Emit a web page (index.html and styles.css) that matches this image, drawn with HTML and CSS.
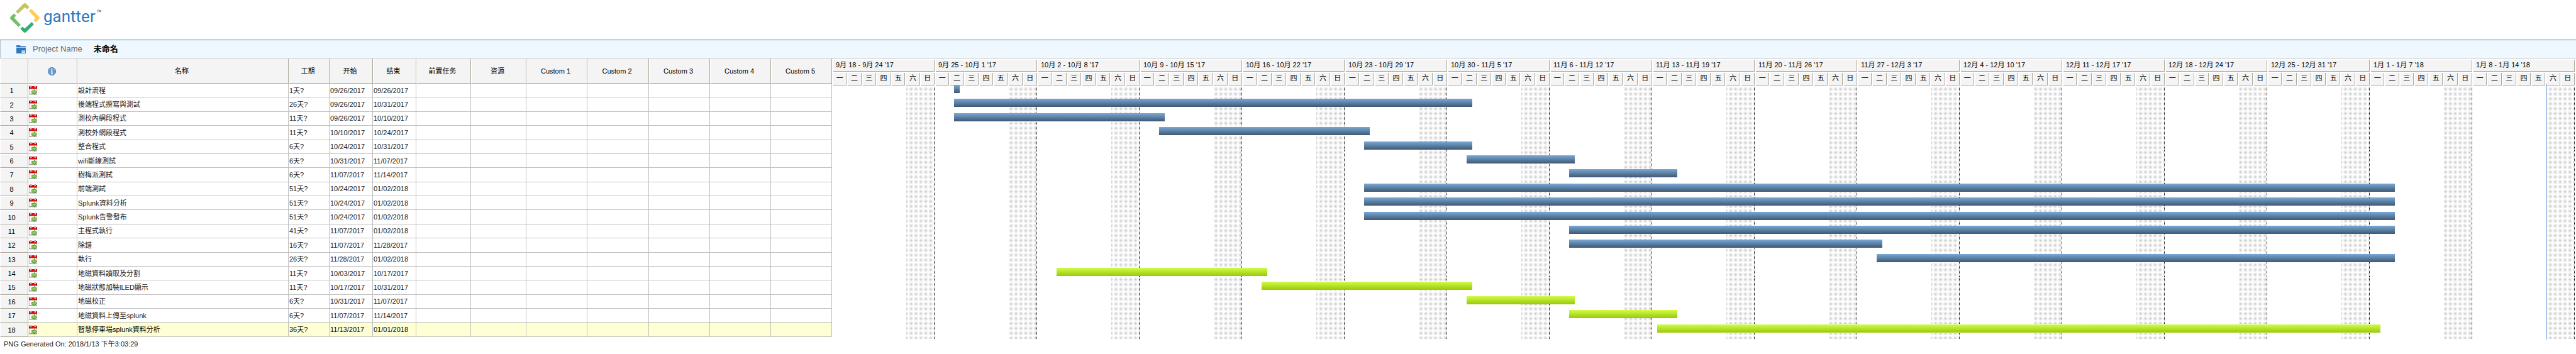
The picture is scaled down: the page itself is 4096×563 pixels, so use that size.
FILE: index.html
```html
<!DOCTYPE html>
<html lang="zh-Hant">
<head>
<meta charset="utf-8">
<title>gantter</title>
<link rel="stylesheet" href="styles.css">
</head>
<body>
<svg class="defs" aria-hidden="true">
  <symbol id="calendar" viewBox="0 0 14 16">
    <path d="M.5 5h13v9.500h-13z" fill="#fff" stroke="#b9b9b9"/>
    <path d="M0 14h14v1.500H0z" fill="#9b9b9b"/>
    <path d="M0 1h14v4.800H0z" fill="#e0060b"/>
    <rect x="2" y="0" width="2.600" height="3.500" rx="1.200" fill="#dcdcdc" stroke="#8d6a6a" stroke-width=".6"/>
    <rect x="9.400" y="0" width="2.600" height="3.500" rx="1.200" fill="#dcdcdc" stroke="#8d6a6a" stroke-width=".6"/>
    <path d="M5 9h4V6.800l4.700 4.400L9 15.500v-2.300H5z" fill="#8ccb55" stroke="#3c8a1c" stroke-width=".9"/>
  </symbol>
</svg>

<header class="brand">
  <svg class="brand-mark" viewBox="-78 -78 156 156" aria-hidden="true">
    <g id="arms" stroke-width="3" stroke-linejoin="round">
      <path fill="#bfc75e" stroke="#bfc75e" d="M-44-33L-6-71Q0-76 6-71L21-55L12-46L0-55L-35-22Z"/>
      <path fill="#fbcd57" stroke="#fbcd57" transform="rotate(90)" d="M-44-33L-6-71Q0-76 6-71L21-55L12-46L0-55L-35-22Z"/>
      <path fill="#2fb073" stroke="#2fb073" transform="rotate(180)" d="M-44-33L-6-71Q0-76 6-71L21-55L12-46L0-55L-35-22Z"/>
      <path fill="#77bd6d" stroke="#77bd6d" transform="rotate(270)" d="M-44-33L-6-71Q0-76 6-71L21-55L12-46L0-55L-35-22Z"/>
    </g>
  </svg>
  <span class="brand-name">gantter</span><span class="brand-tm">™</span>
</header>

<section class="project">
  <svg class="project-icon" viewBox="0 0 16 14" aria-hidden="true">
    <path fill="#2a77bd" d="M0 0h6l1.500 1.500H16V14H0z"/>
    <path fill="#d6e8f8" d="M0 3.300h16v.8H0zM9 9h6v4H9z"/>
    <path fill="#2a77bd" d="M10.500 10.500h3v1h-3z"/>
  </svg>
  <span class="project-label">Project Name</span>
  <strong class="project-name">未命名</strong>
</section>

<main class="chart">
  <table class="tasks">
    <colgroup>
      <col class="c-num"><col class="c-info"><col class="c-name"><col class="c-dur">
      <col class="c-date"><col class="c-date"><col class="c-pred"><col class="c-res">
      <col class="c-custom"><col class="c-custom2"><col class="c-custom"><col class="c-custom"><col class="c-custom">
    </colgroup>
    <thead>
      <tr>
        <th></th>
        <th>
          <svg class="info" viewBox="0 0 14 14" role="img" aria-label="Info">
            <circle cx="7" cy="7" r="6.500" fill="#4f84c4" stroke="#3a669f"/>
            <circle cx="7" cy="7" r="5.400" fill="#5f93d0" stroke="#a9c8ea" stroke-width=".8"/>
            <path fill="#fff" d="M6 2.800h2v1.700H6zM5.300 5.600H8v4.200h.9v1.100H5.200V9.800h.9V6.700h-.8z"/>
          </svg>
        </th>
        <th>名称</th><th>工期</th><th>开始</th><th>结束</th><th>前置任务</th><th>资源</th>
        <th>Custom 1</th><th>Custom 2</th><th>Custom 3</th><th>Custom 4</th><th>Custom 5</th>
      </tr>
    </thead>
    <tbody id="task-rows"></tbody>
  </table>

  <div class="timeline">
    <div class="weeks" id="weeks"></div>
    <div class="bars" id="bars"></div>
    <div class="today" id="today"></div>
  </div>
</main>

<footer class="stamp">PNG Generated On: 2018/1/13 下午3:03:29</footer>
<script src="script.js"></script>
</body>
</html>
```
FILE: styles.css
```css
* { box-sizing: border-box; }

body {
  margin: 0;
  min-height: 100vh;
  display: grid;
  grid-template-rows: 63px 30px 1fr 23px;
  background: #fff;
  color: #222;
  font: 11px/14px "Liberation Sans", "Noto Sans CJK TC", sans-serif;
}

.defs { display: none; }

/* Brand */
.brand {
  display: flex;
  align-items: flex-start;
  padding: 4px 0 0 15px;
}
.brand-mark { width: 49px; height: 49px; }
.brand-name {
  margin-left: 5px;
  color: #2b79c0;
  font: 26px/36px Roboto, sans-serif;
  padding-top: 4px;
}
.brand-tm {
  margin-left: 2px;
  padding-top: 10px;
  color: #444;
  font: 13px/14px Roboto, sans-serif;
}

/* Project bar */
.project {
  display: flex;
  align-items: center;
  padding-left: 25px;
  background: #eff7ff;
  border-top: 1px solid #2a77bd;
  border-bottom: 1px solid #bfbfbf;
  border-left: 1px solid #bfbfbf;
  font-size: 13px;
  line-height: 18px;
}
.project-icon { width: 15px; height: 13px; }
.project-label { margin-left: 11px; color: #6b6b6b; }
.project-name { margin-left: 18px; color: #000; }

/* Task table */
.chart {
  display: grid;
  grid-template-columns: 1323px 1fr;
}
.tasks {
  table-layout: fixed;
  width: 100%;
  margin-bottom: 4px;
  border-collapse: separate;
  border-spacing: 0;
}
.c-num { width: 45px; }
.c-info { width: 78px; }
.c-name { width: 336px; }
.c-dur { width: 65px; }
.c-date { width: 69px; }
.c-pred { width: 87px; }
.c-res { width: 88px; }
.c-custom { width: 97px; }
.c-custom2 { width: 98px; }

.tasks th {
  padding: 0 4px 0 0;
  background: #f4f4f4;
  border: 1px solid #fff;
  border-right-color: #aca899;
  border-bottom-color: #aca899;
  color: #000;
  font-weight: normal;
  text-align: center;
  vertical-align: middle;
}
.tasks thead tr { height: 40px; }
.tasks tbody th { padding: 0 8px 0 0; }
.tasks td {
  padding: 0 0 0 1px;
  border-right: 1px solid #bfbfbf;
  border-bottom: 1px solid #bfbfbf;
  white-space: nowrap;
  vertical-align: middle;
}
.tasks .selected td { background: #ffffd5; color: #000; }
.info { display: block; width: 13px; height: 13px; margin: 0 auto; }
.calendar { display: block; width: 13px; height: 15px; }

/* Timeline */
.timeline {
  position: relative;
  margin-left: 2px;
}
.weeks {
  display: grid;
  grid-template-columns: repeat(17, 1fr);
  height: 100%;
}
.week {
  display: grid;
  grid-template-rows: 19px 20px 1fr;
  row-gap: 2px;
  padding-top: 2px;
}
.week-label,
.day {
  background: #f4f4f4;
  border-right: 1px solid #aca899;
  border-bottom: 1px solid #aca899;
  color: #000;
  white-space: nowrap;
}
.week-label { margin-right: 2px; padding: 1px 0 0 4px; }
.days,
.plot {
  display: grid;
  grid-template-columns: repeat(7, 1fr);
}
.day { margin-right: 2px; text-align: center; line-height: 17px; }
.weekend {
  grid-column: 6 / 8;
  margin-right: 2px;
  border-right: 1px solid #000;
  border-image: repeating-linear-gradient(#fff 0 1px, #000 1px 2px) 1;
  background: conic-gradient(at 1px 1px, transparent 75%, #c8c8c8 0) 0 0 / 2px 2px;
}

.bars {
  position: absolute;
  inset: 40px 0 4px 0;
  display: grid;
  grid-template-rows: repeat(18, 1fr);
}
.bar {
  height: 13px;
  margin-top: 2px;
  background: linear-gradient(#79a9d8, #3f5871);
}
.bar.green { background: linear-gradient(#d2fb4c, #98ca06); }
.today {
  position: absolute;
  top: 40px;
  bottom: 0;
  width: 1px;
  background: #6fa3d3;
}

.stamp { padding-left: 6px; }
```
FILE: script.js
```
const DAY = 86400000;
const CHART_START = Date.UTC(2017, 8, 18);
const WEEKS = 17;
const SPAN = WEEKS * 7;

const tasks = [
  ["設計流程", 1, "09/26/2017", "09/26/2017"],
  ["後端程式撰寫與測試", 26, "09/26/2017", "10/31/2017"],
  ["測校內網段程式", 11, "09/26/2017", "10/10/2017"],
  ["測校外網段程式", 11, "10/10/2017", "10/24/2017"],
  ["整合程式", 6, "10/24/2017", "10/31/2017"],
  ["wifi斷線測試", 6, "10/31/2017", "11/07/2017"],
  ["樹梅派測試", 6, "11/07/2017", "11/14/2017"],
  ["前端測試", 51, "10/24/2017", "01/02/2018"],
  ["Splunk資料分析", 51, "10/24/2017", "01/02/2018"],
  ["Splunk告警發布", 51, "10/24/2017", "01/02/2018"],
  ["主程式執行", 41, "11/07/2017", "01/02/2018"],
  ["除錯", 16, "11/07/2017", "11/28/2017"],
  ["執行", 26, "11/28/2017", "01/02/2018"],
  ["地磁資料讀取及分割", 11, "10/03/2017", "10/17/2017", "green"],
  ["地磁狀態加裝lLED顯示", 11, "10/17/2017", "10/31/2017", "green"],
  ["地磁校正", 6, "10/31/2017", "11/07/2017", "green"],
  ["地磁資料上傳至splunk", 6, "11/07/2017", "11/14/2017", "green"],
  ["智慧停車場splunk資料分析", 36, "11/13/2017", "01/01/2018", "green"]
];

const dayIndex = (text) => {
  const [m, d, y] = text.split("/").map(Number);
  return (Date.UTC(y, m - 1, d) - CHART_START) / DAY;
};
const percent = (days) => (days / SPAN * 100).toFixed(3) + "%";
const label = (date) => `${date.getUTCMonth() + 1}月 ${date.getUTCDate()}`;

document.getElementById("task-rows").innerHTML = tasks.map(([name, days, start, end], i) =>
  `<tr${i === tasks.length - 1 ? ' class="selected"' : ""}><th scope="row">${i + 1}</th>` +
  `<td><svg class="calendar" aria-hidden="true"><use href="#calendar"/></svg></td>` +
  `<td>${name}</td><td>${days}天?</td><td>${start}</td><td>${end}</td>` +
  "<td></td>".repeat(7) + "</tr>"
).join("");

const dayCells = [..."一二三四五六日"].map((d) => `<span class="day">${d}</span>`).join("");
document.getElementById("weeks").innerHTML = Array.from({ length: WEEKS }, (_, i) => {
  const first = new Date(CHART_START + i * 7 * DAY);
  const last = new Date(first.getTime() + 6 * DAY);
  const year = String(last.getUTCFullYear()).slice(2);
  return `<div class="week"><div class="week-label">${label(first)} - ${label(last)} '${year}</div>` +
    `<div class="days">${dayCells}</div><div class="plot"><div class="weekend"></div></div></div>`;
}).join("");

/* Working hours run from a quarter into the start day to past the middle of the end day. */
document.getElementById("bars").innerHTML = tasks.map(([, , start, end, color]) => {
  const from = dayIndex(start) + 0.25;
  const to = dayIndex(end) + 0.63;
  return `<div class="bar ${color || ""}" style="margin-left:${percent(from)};width:${percent(to - from)}"></div>`;
}).join("");

document.getElementById("today").style.left = percent(dayIndex("01/13/2018"));
```
